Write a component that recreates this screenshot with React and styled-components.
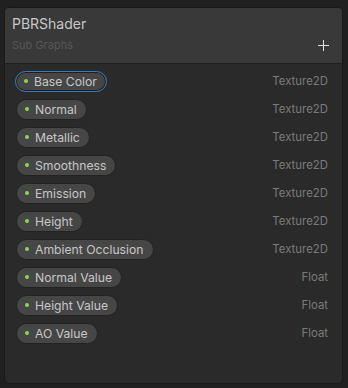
import React from 'react';
import styled, { createGlobalStyle } from 'styled-components';

const GlobalStyle = createGlobalStyle`
  html, body {
    margin: 0;
    padding: 0;
    background: #202020;
    font-family: Inter, "Noto Sans", sans-serif;
  }
`;

const Page = styled.div`
  width: 348px;
  height: 388px;
  padding: 7px 5px 4px 4px;
  box-sizing: border-box;
  display: flex;
`;

const Panel = styled.div`
  flex: 1;
  display: flex;
  flex-direction: column;
  background: #2a2a2a;
  border: 1px solid #191919;
  border-radius: 5px;
  overflow: hidden;
`;

const Header = styled.div`
  background: #393939;
  border-bottom: 1px solid #1e1e1e;
  padding: 7px 12px 9px 7px;
  display: flex;
  flex-direction: column;
`;

const Title = styled.div`
  font-size: 14px;
  color: #c8c8c8;
  line-height: 18px;
`;

const SubRow = styled.div`
  display: flex;
  align-items: center;
  justify-content: space-between;
  margin-top: 3px;
`;

const SubTitle = styled.div`
  font-size: 11px;
  color: #575757;
  line-height: 18px;
`;

const AddButton = styled.div`
  width: 11px;
  height: 11px;
  position: relative;
  margin-right: 1px;

  &::before, &::after {
    content: '';
    position: absolute;
    background: #e2e2e2;
  }
  &::before { left: 0; top: 5px; width: 11px; height: 1.6px; }
  &::after { left: 4.7px; top: 0; width: 1.6px; height: 11px; }
`;

const List = styled.div`
  display: flex;
  flex-direction: column;
  gap: 6px;
  padding: 6px 14px 0 10px;
`;

const Row = styled.div`
  display: flex;
  align-items: center;
  justify-content: space-between;
  height: 22px;
`;

const Pill = styled.div`
  display: flex;
  align-items: center;
  gap: 6px;
  height: 21px;
  padding: 0 9px 0 8px;
  box-sizing: border-box;
  border-radius: 11px;
  background: #464646;
  border: 1px solid ${p => (p.$selected ? '#3a7bb5' : '#222222')};
  box-shadow: ${p => (p.$selected ? 'inset 0 0 0 1px #1e1e1e' : 'none')};
  font-size: 12.2px;
  color: #c6c6c6;
  margin-left: ${p => (p.$selected ? '0' : '1px')};
`;

const Dot = styled.span`
  width: 4px;
  height: 4px;
  border-radius: 50%;
  background: #8ad651;
`;

const TypeLabel = styled.span`
  font-size: 11.4px;
  color: #7a7a7a;
`;

const fields = [
  ['Base Color', 'Texture2D'],
  ['Normal', 'Texture2D'],
  ['Metallic', 'Texture2D'],
  ['Smoothness', 'Texture2D'],
  ['Emission', 'Texture2D'],
  ['Height', 'Texture2D'],
  ['Ambient Occlusion', 'Texture2D'],
  ['Normal Value', 'Float'],
  ['Height Value', 'Float'],
  ['AO Value', 'Float'],
];

export default function App() {
  return (
    <Page>
      <GlobalStyle />
      <Panel>
        <Header>
          <Title>PBRShader</Title>
          <SubRow>
            <SubTitle>Sub Graphs</SubTitle>
            <AddButton />
          </SubRow>
        </Header>
        <List>
          {fields.map(([name, type], i) => (
            <Row key={name}>
              <Pill $selected={i === 0}>
                <Dot />
                {name}
              </Pill>
              <TypeLabel>{type}</TypeLabel>
            </Row>
          ))}
        </List>
      </Panel>
    </Page>
  );
}
